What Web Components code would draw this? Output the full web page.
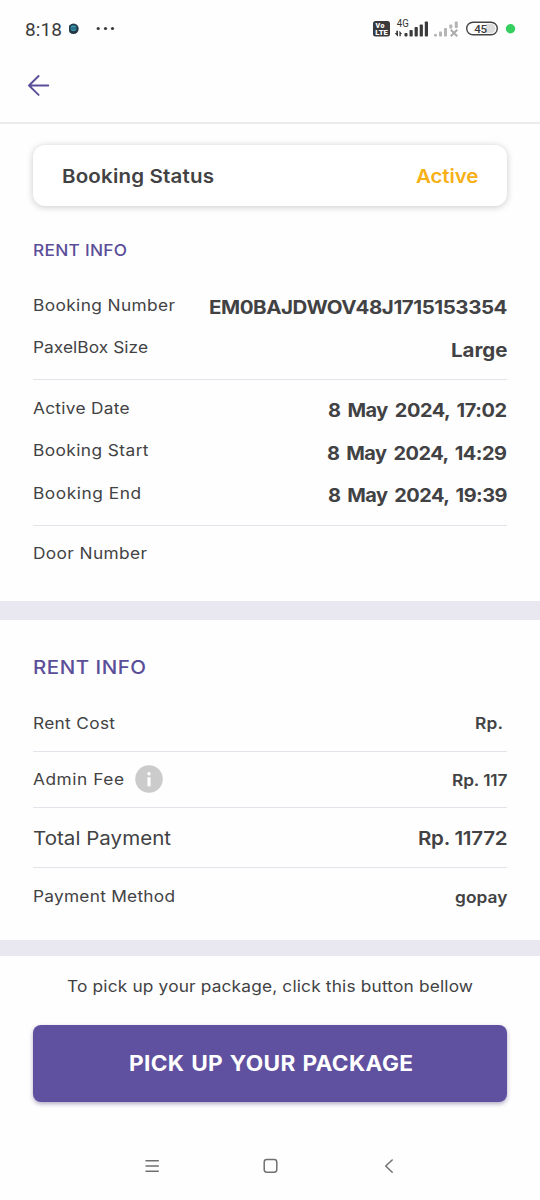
<!DOCTYPE html>
<html lang="en">
<head>
<meta charset="utf-8">
<title>Booking detail</title>
<style>
body{margin:0;background:#fefefe;color:#424244;font-family:Inter,"Liberation Sans",sans-serif}
</style>
</head>
<body>
<booking-page></booking-page>
<script>
const make=(name,html,after)=>customElements.define(name,class extends HTMLElement{
  connectedCallback(){
    if(this.shadowRoot)return;
    const t=document.createElement('template');
    t.innerHTML=html;
    this.attachShadow({mode:'open'}).appendChild(t.content.cloneNode(true));
    if(after)after(this,this.shadowRoot);
  }
});

// A single line of text tracked out to the width given in "w".
make('wide-text',`<style>
:host{display:block;flex:none;white-space:nowrap;text-align:left}
span{display:inline-block;transform-origin:0 50%}
</style><span></span>`,(el,root)=>{
  const s=root.querySelector('span'),w=+el.getAttribute('w'),k=+(el.getAttribute('k')||1.08);
  s.textContent=el.getAttribute('text');
  el.style.width=w+'px';
  const n=s.textContent.length-1;
  s.style.letterSpacing=((w/k-s.getBoundingClientRect().width)/n).toFixed(3)+'px';
  s.style.transform='scaleX('+k+')';
});

make('status-bar',`<style>
:host{display:flex;height:57px;align-items:center;padding:0 25px;box-sizing:border-box;font-family:Roboto,sans-serif}
wide-text{font-size:19px;line-height:24px;color:#3c3c3c;margin-top:2px}
svg{display:block}
.l{margin-left:7px}.r{margin-left:auto;margin-right:-2px}
text{font-family:Roboto,sans-serif}
</style>
<wide-text text="8:18" w="37" k="1"></wide-text>
<svg class="l" width="50" height="20" viewBox="69.500 19 50 20"><circle cx="74" cy="28.7" r="5.2" fill="#233844"/><circle cx="74" cy="28" r="3.2" fill="#266d86"/><path d="M71.5 27.5q2-2 4.5-.5M72 30q2 1 4-.3" stroke="#4aa3ba" fill="none"/><g fill="#3a3a3a"><circle cx="98.7" cy="28.5" r="1.6"/><circle cx="106" cy="28.5" r="1.6"/><circle cx="113" cy="28.5" r="1.6"/></g></svg>
<svg class="r" width="147" height="24" viewBox="370 17 147 24">
<rect x="373" y="21" width="17" height="15.5" rx="2.5" fill="#3a3a3c"/>
<text x="375.5" y="28" font-size="7" font-weight="900" fill="#fff" textLength="9">Vo</text>
<text x="375.3" y="34.6" font-size="7" font-weight="900" fill="#fff" textLength="12.500" lengthAdjust="spacingAndGlyphs">LTE</text>
<text x="396.8" y="27.2" font-size="10" fill="#333" textLength="12" lengthAdjust="spacingAndGlyphs">4G</text>
<path d="M397.3 36.3l-2.6-3.4h1.6v-2.2h1.7v5.6zM399.4 30.700l2.700 3.300h-1.300v2.300h-1.400z" fill="#3a3a3c"/>
<g fill="#3a3a3c"><rect x="404.5" y="33" width="3" height="3.5" rx=".8"/><rect x="409.5" y="30" width="3.2" height="6.5" rx=".8"/><rect x="414.6" y="27" width="3.2" height="9.5" rx=".8"/><rect x="419.7" y="24.5" width="3.2" height="12" rx=".8"/><rect x="424.8" y="21.5" width="3.2" height="15" rx=".8"/></g>
<g fill="#b5b5b5"><rect x="434" y="34" width="3" height="2.5" rx=".8"/><rect x="439" y="31.5" width="3" height="5" rx=".8"/><rect x="444" y="28" width="3" height="8.500" rx=".8"/><rect x="449.3" y="24.500" width="3" height="4" rx=".8"/><rect x="454.8" y="21.500" width="3" height="6.500" rx=".8"/></g>
<path d="M450.800 29.800l6.400 6.400M457.200 29.800l-6.400 6.400" stroke="#aaa" stroke-width="2"/>
<rect x="466.7" y="22.2" width="30.6" height="12.6" rx="6.3" fill="#fff" stroke="#454545" stroke-width="1.4"/>
<path d="M486 23.8h4.800a4.700 4.700 0 0 1 0 9.400H486z" fill="#ddd"/>
<text x="474.2" y="32.7" font-size="11.5" font-weight="500" fill="#3a3a3a" textLength="12.800">45</text>
<circle cx="510.5" cy="28.7" r="4.7" fill="#35cf60"/>
</svg>`);

make('app-header',`<style>
:host{display:flex;height:67px;box-sizing:border-box;align-items:center;padding:0 27px 10px;border-bottom:2px solid #ececee}
</style><svg width="24" height="24" viewBox="0 0 24 24" fill="none" stroke="#5b4e99" stroke-width="1.9" stroke-linecap="round" stroke-linejoin="round"><path d="M21.300 12.500H2M11.600 3L2 12.500l9.600 9.400"/></svg>`);

make('status-card',`<style>
:host{display:flex;box-sizing:border-box;height:61px;margin:21px 33px 0;padding:2px 29px 0;align-items:center;justify-content:space-between;border-radius:12px;background:#fff;box-shadow:0 1px 7px rgba(0,0,0,.21);font-size:19px;line-height:24px}
</style><slot></slot>`);

make('section-title',`<style>
:host{display:block;color:#5b4e99;font-size:16px;font-weight:550;line-height:20px}
:host([big]){font-size:19px}
</style><slot></slot>`);

make('info-row',`<style>
:host{display:flex;height:42px;align-items:center;justify-content:space-between;font-size:16px;line-height:24px}
.l{display:flex;align-items:center;gap:11px}
.v{font-size:19px;font-weight:700;padding-top:6px;word-spacing:2.500px}
:host([low]) .v{padding-top:8px}
:host([cost]) .v{font-size:16px;font-weight:580;padding-top:0;word-spacing:0}
:host([total]),:host([total]) .v{font-size:19px}
:host([total]) .l{padding-top:2px}
:host([total]) .v{padding-top:1px}
</style><div class="l"><slot></slot></div><div class="v"><slot name="value"></slot></div>`);

make('info-badge',`<style>:host{display:block;width:28px;height:28px}svg{display:block}</style>
<svg width="28" height="28" viewBox="0 0 28 28"><circle cx="14" cy="14" r="13.8" fill="#cbcbcb"/><circle cx="14" cy="8.8" r="1.7" fill="#fff"/><path d="M12.4 12.300h3.200v9h-3.200z" fill="#fff"/></svg>`);

make('rule-line',`<style>:host{display:block;height:1px;background:#e3e3e9;flex:none}</style>`);
make('section-band',`<style>:host{display:block;background:#e9e8f1}</style>`);

make('pick-button',`<style>
:host{display:block;margin:0 33px}
button{display:flex;width:100%;height:77px;align-items:center;justify-content:center;border:0;border-radius:8px;padding:0 0 0 1px;background:#5f519f;color:#fff;font:700 21px/26px Inter,sans-serif;word-spacing:1px;box-shadow:0 2px 4px rgba(60,50,110,.4)}
</style><button><slot></slot></button>`);

make('nav-bar',`<style>:host{display:flex;padding:0 142px;justify-content:space-between;height:20px}
svg{display:block;fill:none;stroke:#707070;stroke-width:1.5;stroke-linecap:round;stroke-linejoin:round}</style>
<svg width="20" height="20"><path d="M4 4.800h12.300M4 10h12.300M4 15.200h12.300"/></svg>
<svg width="20" height="20"><rect x="4.2" y="3.6" width="12.6" height="12.6" rx="2.6"/></svg>
<svg width="20" height="20"><path d="M14.200 4L7.700 10l6.500 6.300"/></svg>`);

make('booking-page',`<style>
:host{display:block;width:540px;height:1200px;overflow:hidden;background:#fefefe}
.s{display:flex;flex-direction:column;padding:0 33px;box-sizing:border-box}
.a{height:395px;padding-top:34px}
.b{height:320px;padding-top:38px}
.hint{display:flex;justify-content:center;font-size:16px;line-height:24px;height:51px;padding-top:18px;box-sizing:border-box}
</style>
<status-bar></status-bar>
<app-header></app-header>
<status-card><wide-text text="Booking Status" w="152" style="font-weight:560"></wide-text><wide-text text="Active" w="62.500" style="font-weight:560;color:#f8b017"></wide-text></status-card>
<div class="s a">
<section-title><wide-text text="RENT INFO" w="94"></wide-text></section-title>
<info-row style="margin-top:24px"><wide-text text="Booking Number" w="142"></wide-text><wide-text slot="value" text="EM0BAJDWOV48J1715153354" w="298.500"></wide-text></info-row>
<info-row low><wide-text text="PaxelBox Size" w="115"></wide-text><wide-text slot="value" text="Large" w="56.500"></wide-text></info-row>
<rule-line style="margin:11px 0 7px"></rule-line>
<info-row><wide-text text="Active Date" w="96.500"></wide-text><wide-text slot="value" text="8 May 2024, 17:02" w="179" k="1.05"></wide-text></info-row>
<info-row low><wide-text text="Booking Start" w="115.500"></wide-text><wide-text slot="value" text="8 May 2024, 14:29" w="180" k="1.05"></wide-text></info-row>
<info-row style="margin-top:1px"><wide-text text="Booking End" w="108"></wide-text><wide-text slot="value" text="8 May 2024, 19:39" w="179.500" k="1.05"></wide-text></info-row>
<rule-line style="margin:11px 0 6px"></rule-line>
<info-row><wide-text text="Door Number" w="114"></wide-text></info-row>
</div>
<section-band style="height:19px"></section-band>
<div class="s b">
<section-title big><wide-text text="RENT INFO" w="113"></wide-text></section-title>
<info-row cost style="height:44px;margin-top:23px"><wide-text text="Rent Cost" w="82"></wide-text><wide-text slot="value" text="Rp." w="28" style="margin-right:4px"></wide-text></info-row>
<rule-line style="margin-top:6px"></rule-line>
<info-row cost style="height:54px;margin-bottom:1px"><wide-text text="Admin Fee" w="91"></wide-text><info-badge></info-badge><wide-text slot="value" text="Rp. 117" w="55.500" style="margin-top:2px"></wide-text></info-row>
<rule-line></rule-line>
<info-row cost total style="height:60px;margin-bottom:-1px"><wide-text text="Total Payment" w="138"></wide-text><wide-text slot="value" text="Rp. 11772" w="89.500"></wide-text></info-row>
<rule-line></rule-line>
<info-row cost style="height:56px"><wide-text text="Payment Method" w="142"></wide-text><wide-text slot="value" text="gopay" w="52.500" style="margin-top:2px"></wide-text></info-row>
</div>
<section-band style="height:16px"></section-band>
<div class="hint"><wide-text text="To pick up your package, click this button bellow" w="406"></wide-text></div>
<div style="height:18px"></div>
<pick-button><wide-text text="PICK UP YOUR PACKAGE" w="284"></wide-text></pick-button>
<div style="height:54px"></div>
<nav-bar></nav-bar>`);
</script>
</body>
</html>
